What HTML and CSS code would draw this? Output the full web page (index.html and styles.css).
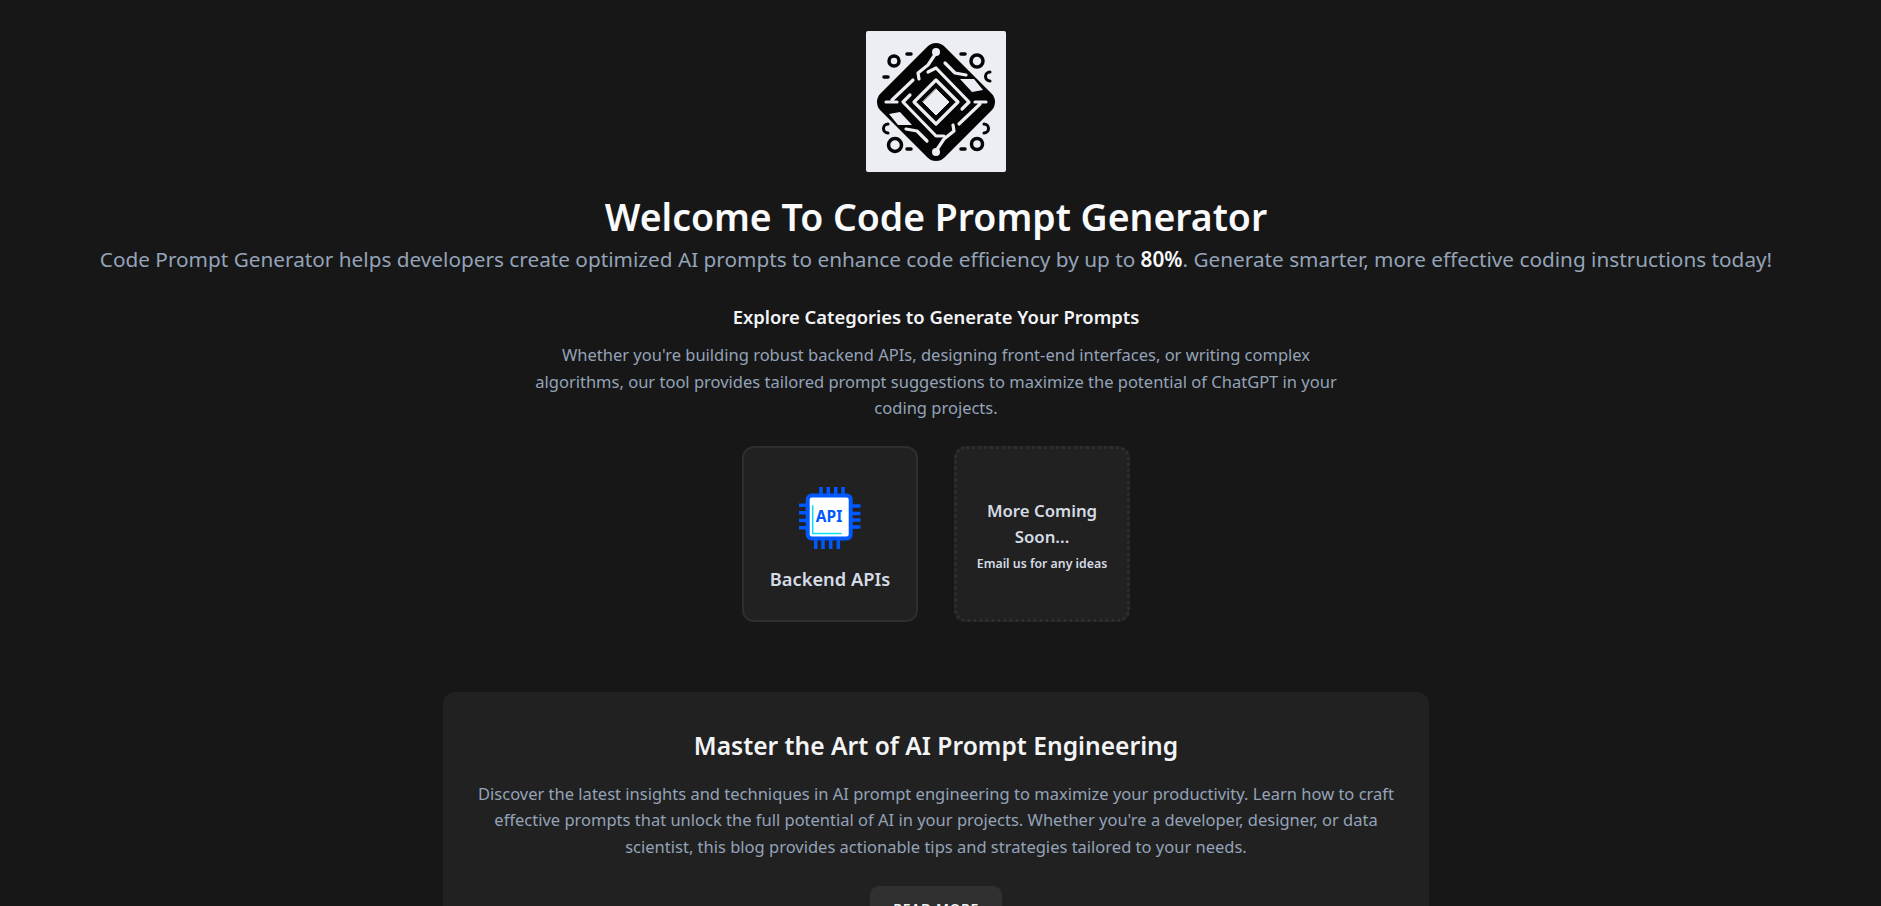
FILE: index.html
```html
<!DOCTYPE html>
<html lang="en">
<head>
<meta charset="utf-8">
<title>Code Prompt Generator</title>
<link rel="stylesheet" href="styles.css">
</head>
<body>
<main class="page">
  <div class="logo">
    <svg viewBox="0 0 140 141" width="140" height="141" fill="none" stroke-linecap="round" stroke-linejoin="round">
      <path d="M70 24 L117 71 L70 118 L23 71 Z" fill="#050505" stroke="#050505" stroke-width="24"/>
      <g stroke="#eceef4" stroke-width="3.200">
        <path d="M70 22 L62 34 L52 42 L53 48 M47 49 L26 69 M20 71 H31"/>
        <path d="M70 120 L78 108 L88 100 L87 94 M93 93 L114 73 M120 71 H109"/>
        <path d="M62 41 L70 37 L103 71 L96 78 M78 105 L70 105 L37 71 L44 64"/>
        <path d="M70 49 L92 71 L70 93 L48 71 Z"/>
        <path d="M79 32 L89 42 L100 44 M61 110 L51 100 L40 98"/>
      </g>
      <path d="M70 58 L83 71 L70 84 L57 71 Z" fill="#eceef4" stroke="#eceef4" stroke-width="1"/>
      <path d="M94 48 H108 L117 59 L106 61 Z M46 94 H32 L23 83 L34 81 Z" fill="#eceef4"/>
      <circle cx="70" cy="21" r="4" fill="#eceef4"/>
      <circle cx="70" cy="121" r="4" fill="#eceef4"/>
      <g stroke="#050505">
        <circle cx="28" cy="30" r="5" stroke-width="3.500"/>
        <circle cx="111" cy="30" r="6" stroke-width="3.500"/>
        <circle cx="29" cy="114" r="6.500" stroke-width="3.500"/>
        <circle cx="111" cy="113" r="5.500" stroke-width="3.500"/>
        <path d="M41 23 H45 M95 23 H99 M18 46 H22 M41 118 H45 M95 118 H99" stroke-width="3.500"/>
        <path d="M124 41 A4.500 4.500 0 0 0 124 50 M22 93 A4.500 4.500 0 0 0 22 102 M118 93 A4.500 4.500 0 0 1 118 102" stroke-width="3"/>
      </g>
    </svg>
  </div>
  <h1 class="title">Welcome To Code Prompt Generator</h1>
  <p class="lead">Code Prompt Generator helps developers create optimized AI prompts to enhance code efficiency by up to <strong class="lead-strong">80%</strong>. Generate smarter, more effective coding instructions today!</p>
  <h2 class="explore-title">Explore Categories to Generate Your Prompts</h2>
  <p class="explore-text">Whether you're building robust backend APIs, designing front-end interfaces, or writing complex algorithms, our tool provides tailored prompt suggestions to maximize the potential of ChatGPT in your coding projects.</p>
  <div class="cards">
    <a class="card card-solid">
      <svg class="api-icon" viewBox="0 0 64 64" width="64" height="64" fill="none">
        <path d="M23 9V1M30.300 9V1M37.700 9V1M45 9V1M17.700 63V54M25 63V54M32.700 63V54M40.300 63V54M9 19.200H1M9 26.800H1M9 34.500H1M9 41.800H1M62.500 20H54M62.500 27.500H54M62.500 34H54M62.500 41H54" stroke="#0059ff" stroke-width="3.500"/>
        <rect x="9.700" y="9.500" width="43" height="43" rx="4" fill="#fff" stroke="#0059ff" stroke-width="4"/>
        <path d="M14.700 19.200V47.500H43.700" stroke="#0fe0f0" stroke-width="1.500"/>
        <text x="31" y="35.500" class="api-text">API</text>
      </svg>
      <span class="card-label card-label-large">Backend APIs</span>
    </a>
    <div class="card card-dashed">
      <span class="card-label card-label-small">More Coming Soon...</span>
      <span class="card-note">Email us for any ideas</span>
    </div>
  </div>
  <section class="blog">
    <h2 class="blog-title">Master the Art of AI Prompt Engineering</h2>
    <p class="blog-text">Discover the latest insights and techniques in AI prompt engineering to maximize your productivity. Learn how to craft effective prompts that unlock the full potential of AI in your projects. Whether you're a developer, designer, or data scientist, this blog provides actionable tips and strategies tailored to your needs.</p>
    <a class="btn">READ MORE</a>
  </section>
</main>
</body>
</html>
```
FILE: styles.css
```css
* { box-sizing: border-box; }
html, body { margin: 0; height: 906px; overflow: hidden; }
body { background: #171717; font-family: "Noto Sans", sans-serif; color: #e5e7eb; }
.page { width: 1872px; display: flex; flex-direction: column; align-items: center; padding-top: 31px; text-align: center; }
.logo { width: 140px; height: 141px; background: #eceef4; border-radius: 2px; }
.logo svg { display: block; }
.title { margin: 25px 0 0; font-size: 37.400px; line-height: 40px; font-weight: 600; color: #f9fafb; }
.lead { margin: 8px 0 0; font-size: 20.750px; line-height: 28px; color: #94a3b8; }
.lead-strong { color: #f9fafb; font-weight: 600; }
.explore-title { margin: 30px 0 0; font-size: 18.400px; line-height: 28px; font-weight: 600; color: #f3f4f6; }
.explore-text { margin: 11px 0 0; width: 820px; font-size: 16.500px; line-height: 26.500px; color: #94a3b8; }
.cards { margin-top: 24.500px; display: flex; gap: 36px; }
.card { width: 176px; height: 176px; background: #212121; border-radius: 12px; display: flex; flex-direction: column; align-items: center; justify-content: center; color: #d5dbe5; }
.card-solid { border: 2px solid #2e2e2e; padding: 26px 16px 16px; }
.card-dashed { border: 3px dotted #2e2e2e; padding: 18px 16px 16px; }
.api-icon { display: block; margin-bottom: 15px; }
.api-text { font-family: "Noto Sans", sans-serif; font-size: 15.500px; font-weight: 700; fill: #0059ff; text-anchor: middle; }
.card-label { line-height: 26px; font-weight: 600; }
.card-label-large { font-size: 18.300px; line-height: 28px; }
.card-label-small { font-size: 16.800px; }
.card-note { margin-top: 6px; font-size: 12.300px; line-height: 16px; font-weight: 600; }
.blog { margin-top: 70px; width: 986px; background: #212121; border-radius: 12px; padding: 38px 32px 32px; display: flex; flex-direction: column; align-items: center; }
.blog-title { margin: 0; font-size: 24.600px; line-height: 32px; font-weight: 600; color: #f3f4f6; }
.blog-text { margin: 18.500px 0 0; font-size: 16.500px; line-height: 26.500px; color: #94a3b8; }
.btn { margin-top: 26px; width: 132px; height: 44px; background: #303030; border-radius: 9px; display: flex; align-items: center; justify-content: center; font-size: 14px; font-weight: 600; letter-spacing: 0.500px; color: #f3f4f6; }
```
